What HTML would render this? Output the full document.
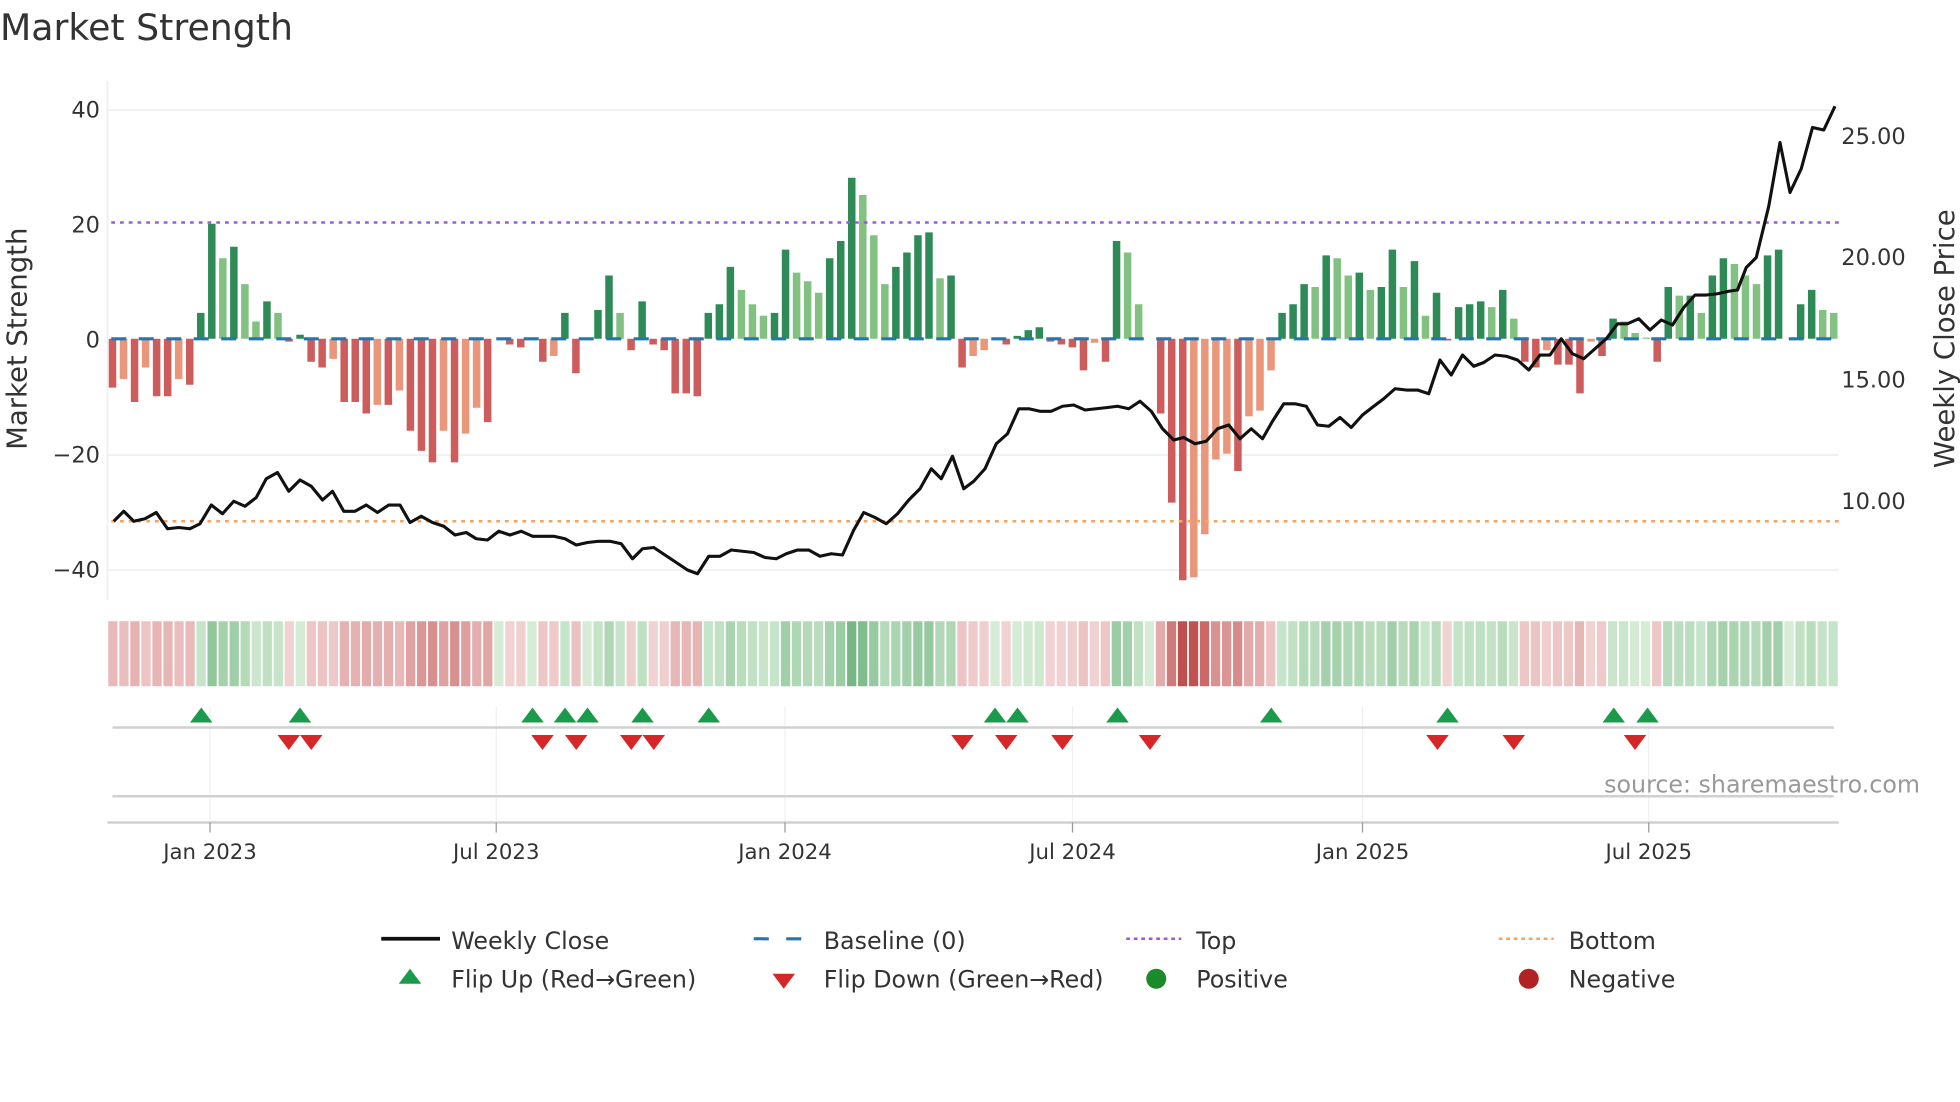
<!DOCTYPE html>
<html><head><meta charset="utf-8">
<style>
html,body{margin:0;padding:0;background:#fff;}
svg{display:block;font-family:"DejaVu Sans","Liberation Sans",sans-serif;}
</style></head>
<body>
<svg id="s" width="1960" height="1102" viewBox="0 0 1568 881.6" xmlns="http://www.w3.org/2000/svg">
<rect width="1568" height="882" fill="#fff"/>
<text x="0" y="32" font-size="29" fill="#333">Market Strength</text>
<g stroke="#eef0f3" stroke-width="1.5">
<line x1="86" y1="88" x2="1471" y2="88"/>
<line x1="86" y1="364" x2="1471" y2="364"/>
<line x1="86" y1="456" x2="1471" y2="456"/>
</g>
<line x1="86" y1="65" x2="86" y2="480" stroke="#eef0f3" stroke-width="1.5"/>
<g font-size="18" fill="#333" text-anchor="end">
<text x="80" y="94">40</text><text x="80" y="186">20</text><text x="80" y="278">0</text>
<text x="80" y="370">−20</text><text x="80" y="462">−40</text>
</g>
<g font-size="18" fill="#333">
<text x="1473" y="115">25.00</text><text x="1473" y="212">20.00</text>
<text x="1473" y="310">15.00</text><text x="1473" y="407">10.00</text>
</g>
<text transform="translate(21,271) rotate(-90)" font-size="22" fill="#333" text-anchor="middle">Market Strength</text>
<text transform="translate(1563,271) rotate(-90)" font-size="22" fill="#333" text-anchor="middle">Weekly Close Price</text>
<g id="bars"></g>
<line x1="89" y1="271" x2="1471" y2="271" stroke="#1f77b4" stroke-width="2.5" stroke-dasharray="12,10"/>
<line x1="89" y1="178" x2="1471" y2="178" stroke="#9b59e0" stroke-width="2" stroke-dasharray="3,4"/>
<line x1="89" y1="417" x2="1471" y2="417" stroke="#f4a460" stroke-width="2" stroke-dasharray="3,4"/>
<polyline id="price" fill="none" stroke="#111" stroke-width="2.5" stroke-linejoin="round"/>
<g id="heat"></g>
<g stroke="#eef0f3" stroke-width="1">
<line x1="168" y1="565" x2="168" y2="658"/><line x1="397" y1="565" x2="397" y2="658"/>
<line x1="628" y1="565" x2="628" y2="658"/><line x1="858" y1="565" x2="858" y2="658"/>
<line x1="1090" y1="565" x2="1090" y2="658"/><line x1="1319" y1="565" x2="1319" y2="658"/>
</g>
<line x1="90" y1="582" x2="1467" y2="582" stroke="#d0d0d0" stroke-width="2"/>
<line x1="90" y1="637" x2="1467" y2="637" stroke="#d0d0d0" stroke-width="2"/>
<line x1="86" y1="658" x2="1471" y2="658" stroke="#d0d0d0" stroke-width="2"/>
<g id="flips"></g>
<g stroke="#999" stroke-width="1">
<line x1="168" y1="658" x2="168" y2="666"/><line x1="397" y1="658" x2="397" y2="666"/>
<line x1="628" y1="658" x2="628" y2="666"/><line x1="858" y1="658" x2="858" y2="666"/>
<line x1="1090" y1="658" x2="1090" y2="666"/><line x1="1319" y1="658" x2="1319" y2="666"/>
</g>
<g font-size="17" fill="#333" text-anchor="middle">
<text x="168" y="687">Jan 2023</text><text x="397" y="687">Jul 2023</text>
<text x="628" y="687">Jan 2024</text><text x="858" y="687">Jul 2024</text>
<text x="1090" y="687">Jan 2025</text><text x="1319" y="687">Jul 2025</text>
</g>
<text x="1536" y="634" font-size="19" fill="#999" text-anchor="end">source: sharemaestro.com</text>
<g font-size="19" fill="#333">
<line x1="305" y1="751" x2="352" y2="751" stroke="#111" stroke-width="3"/>
<text x="361" y="759">Weekly Close</text>
<line x1="603" y1="751" x2="646" y2="751" stroke="#1f77b4" stroke-width="2.5" stroke-dasharray="12,14"/>
<text x="659" y="759">Baseline (0)</text>
<line x1="901" y1="751" x2="945" y2="751" stroke="#9b59e0" stroke-width="2" stroke-dasharray="3,3"/>
<text x="957" y="759">Top</text>
<line x1="1199" y1="751" x2="1243" y2="751" stroke="#f4a460" stroke-width="2" stroke-dasharray="3,3"/>
<text x="1255" y="759">Bottom</text>
<polygon points="328,775 319,787 337,787" fill="#1a9a4a"/>
<text x="361" y="790">Flip Up (Red→Green)</text>
<polygon points="618,779 636,779 627,791" fill="#d62728"/>
<text x="659" y="790">Flip Down (Green→Red)</text>
<circle cx="925" cy="783" r="8" fill="#1a8a2a"/>
<text x="957" y="790">Positive</text>
<circle cx="1223" cy="783" r="8" fill="#b22222"/>
<text x="1255" y="790">Negative</text>
</g>
</svg>
<script>
var NS="http://www.w3.org/2000/svg";
function el(t,a,p){var e=document.createElementNS(NS,t);for(var k in a)e.setAttribute(k,a[k]);document.getElementById(p).appendChild(e);return e;}
var v=[-8.5,-7,-11,-5,-10,-10,-7,-8,4.5,20,14,16,9.5,3,6.5,4.5,-0.5,0.7,-4,-5,-3.5,-11,-11,-13,-11.5,-11.5,-9,-16,-19.5,-21.5,-16,-21.5,-16.5,-12,-14.5,0,-1,-1.5,0,-4,-3,4.5,-6,0,5,11,4.5,-2,6.5,-1,-2,-9.5,-9.5,-10,4.5,6,12.5,8.5,6,4,4.5,15.5,11.5,10,8,14,17,28,25,18,9.5,12.5,15,18,18.5,10.5,11,-5,-3,-2,0,-1,0.5,1.5,2,-0.5,-1,-1.5,-5.5,-0.7,-4,17,15,6,0,-13,-28.5,-42,-41.5,-34,-21,-20,-23,-13.5,-12.5,-5.5,4.5,6,9.5,9,14.5,14,11,11.5,8.5,9,15.5,9,13.5,4,8,-0.3,5.5,6,6.5,5.5,8.5,3.5,-4,-5,-2,-4.5,-4.5,-9.5,-0.5,-3,3.5,3,1,0.2,-4,9,7.5,7.5,4.5,11,14,13,11,9.5,14.5,15.5,0,6,8.5,5,4.5];
var n=v.length,sp=1377/(n-1);
function lerp(a,b,t){return Math.round(a+(b-a)*t);}
for(var i=0;i<n;i++){
 var x=90+i*sp,val=v[i],p=i?v[i-1]:0,c;
 if(val>0)c=(val>=p)?"#2e8b57":"#82c182";else c=(val<=p)?"#cd5c5c":"#e9967a";
 var y0=271,y1=271-val*4.6;
 if(val!==0)el("rect",{x:x-3,y:Math.min(y0,y1),width:6,height:Math.abs(y1-y0),fill:c},"bars");
 var t,col;
 if(val>=0){t=Math.min(1,Math.abs(val)/30);col="rgb("+lerp(214,110,t)+","+lerp(236,180,t)+","+lerp(214,125,t)+")";}
 else{t=Math.min(1,Math.abs(val)/42);col="rgb("+lerp(242,192,t)+","+lerp(212,80,t)+","+lerp(212,78,t)+")";}
 el("rect",{x:86+i*(1385/n)+0.6,y:497,width:1385/n-1.4,height:52,fill:col},"heat");
}
var pts=[[91,417],[99,409],[107,417],[116,415],[125,410],[134,423],[143,422],[152,423],[160,419],[169,404],[178,411],[187,401],[196,405],[205,398],[213,383],[222,378],[231,393],[240,384],[249,389],[258,400],[266,393],[275,409],[284,409],[293,404],[302,410],[311,404],[320,404],[328,418],[337,413],[346,418],[355,421],[364,428],[373,426],[381,431],[390,432],[399,425],[408,428],[417,425],[426,429],[435,429],[443,429],[452,431],[461,436],[470,434],[479,433],[488,433],[497,435],[506,447],[514,439],[523,438],[532,444],[541,450],[550,456],[558,459],[567,445],[576,445],[585,440],[594,441],[603,442],[612,446],[621,447],[629,443],[638,440],[647,440],[656,445],[665,443],[674,444],[683,424],[691,410],[700,414],[709,419],[718,411],[727,400],[736,391],[745,375],[753,383],[762,365],[771,391],[779,385],[788,375],[797,355],[806,347],[815,327],[823,327],[832,329],[841,329],[850,325],[859,324],[868,328],[877,327],[886,326],[894,325],[903,327],[912,321],[921,329],[930,343],[939,352],[947,350],[956,355],[965,353],[974,343],[983,340],[992,351],[1001,343],[1010,351],[1018,337],[1027,323],[1036,323],[1045,325],[1054,340],[1063,341],[1072,334],[1081,342],[1090,332],[1099,325],[1107,319],[1116,311],[1125,312],[1134,312],[1143,315],[1152,288],[1161,300],[1170,284],[1179,293],[1187,290],[1196,284],[1205,285],[1214,288],[1223,296],[1232,284],[1240,284],[1249,271],[1258,283],[1267,287],[1276,279],[1285,271],[1294,259],[1302,259],[1311,255],[1320,264],[1329,256],[1338,260],[1347,246],[1356,236],[1365,236],[1374,235],[1383,233],[1390,232],[1397,214],[1405,206],[1415,165],[1424,114],[1432,154],[1441,135],[1450,102],[1459,104],[1468,85]];
document.getElementById("price").setAttribute("points",pts.map(function(p){return p.join(",");}).join(" "));
[161,240,426,452,470,514,567,796,814,894,1017,1158,1291,1318].forEach(function(x){el("polygon",{points:(x)+",566 "+(x-9)+",578 "+(x+9)+",578",fill:"#1a9a4a"},"flips");});
[231,249,434,461,505,523,770,805,850,920,1150,1211,1308].forEach(function(x){el("polygon",{points:(x-9)+",588 "+(x+9)+",588 "+x+",600",fill:"#d62728"},"flips");});
</script>
</body></html>
